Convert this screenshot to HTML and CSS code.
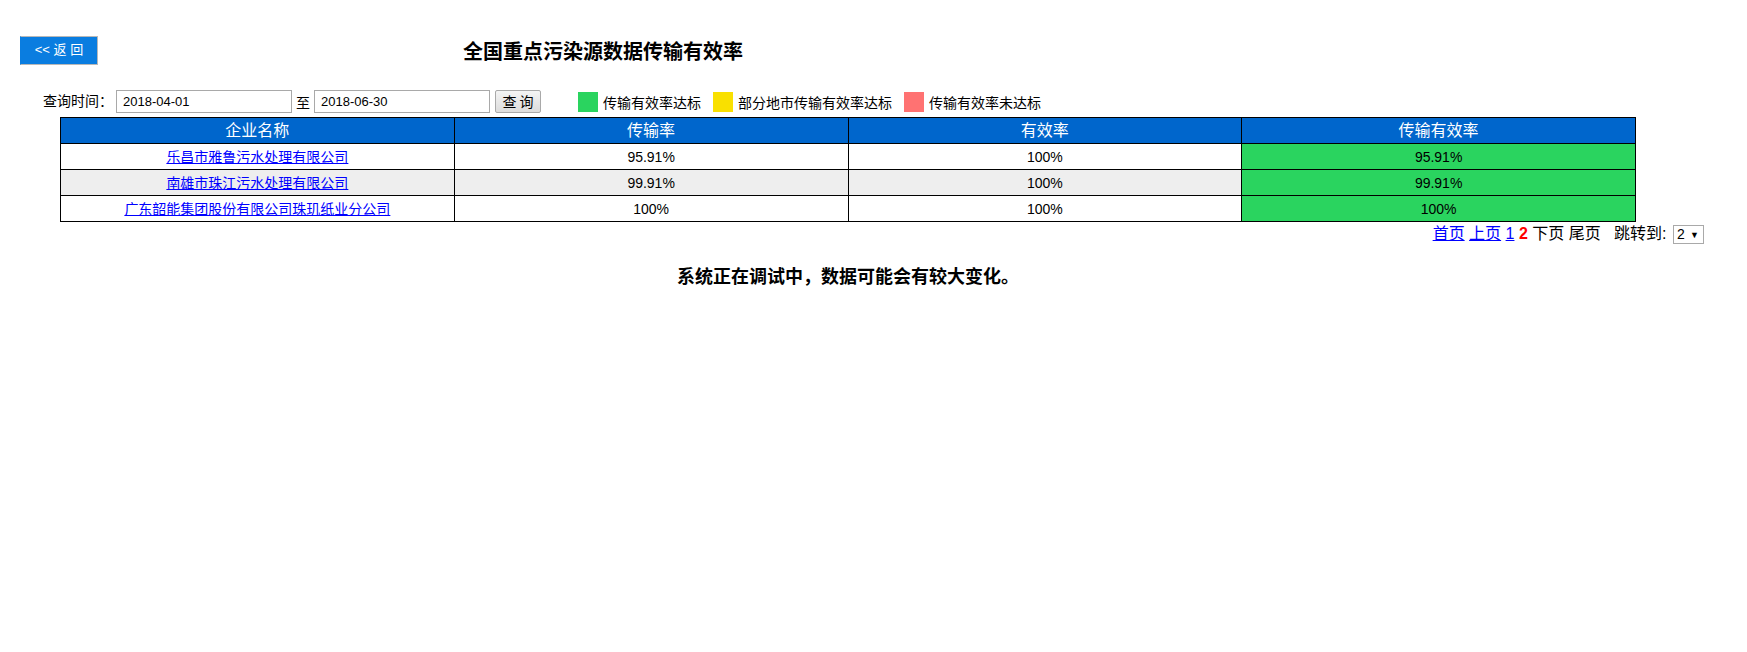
FILE: index.html
```html
<!DOCTYPE html>
<html lang="zh-CN">
<head>
    <meta charset="UTF-8">
    <title>全国重点污染源数据传输有效率</title>
    <link rel="stylesheet" href="styles.css">
</head>
<body>
    <div class="header">
        <a class="back-btn" href="#">&lt;&lt; 返 回</a>
        <h1 class="title">全国重点污染源数据传输有效率</h1>
    </div>

    <div class="search">
        <span class="label">查询时间：</span>
        <input type="text" class="date" value="2018-04-01">
        <span class="to">至</span>
        <input type="text" class="date" value="2018-06-30">
        <button class="query-btn">查 询</button>
        <div class="legend">
            <span class="swatch green"></span><span class="legend-text">传输有效率达标</span>
            <span class="swatch yellow"></span><span class="legend-text">部分地市传输有效率达标</span>
            <span class="swatch red"></span><span class="legend-text">传输有效率未达标</span>
        </div>
    </div>

    <table class="data">
        <tr>
            <th>企业名称</th>
            <th>传输率</th>
            <th>有效率</th>
            <th>传输有效率</th>
        </tr>
        <tr>
            <td><a href="#">乐昌市雅鲁污水处理有限公司</a></td>
            <td>95.91%</td>
            <td>100%</td>
            <td class="ok">95.91%</td>
        </tr>
        <tr class="alt">
            <td><a href="#">南雄市珠江污水处理有限公司</a></td>
            <td>99.91%</td>
            <td>100%</td>
            <td class="ok">99.91%</td>
        </tr>
        <tr>
            <td><a href="#">广东韶能集团股份有限公司珠玑纸业分公司</a></td>
            <td>100%</td>
            <td>100%</td>
            <td class="ok">100%</td>
        </tr>
    </table>

    <div class="pager">
        <a href="#">首页</a> <a href="#">上页</a> <a href="#">1</a> <span class="current">2</span> <span>下页</span> <span>尾页</span>&nbsp;&nbsp;&nbsp;跳转到:
        <span class="jump">
            <select>
                <option>1</option>
                <option selected>2</option>
            </select>
            <span class="arrow">▼</span>
        </span>
    </div>

    <p class="notice">系统正在调试中，数据可能会有较大变化。</p>
</body>
</html>
```

FILE: styles.css
```css
body {
    margin: 0;
    font-family: "Liberation Sans", "Noto Sans CJK SC", sans-serif;
    font-size: 14px;
    color: #000;
    background: #fff;
}

.header {
    display: flex;
    align-items: center;
    padding: 36px 0 0 20px;
    height: 29px;
}

.back-btn {
    display: block;
    box-sizing: border-box;
    width: 78px;
    height: 29px;
    line-height: 26px;
    background-color: #0a7de0;
    border: 1px solid #b8b8b8;
    border-left-color: #0a7de0;
    color: white;
    font-size: 13px;
    text-align: center;
    text-decoration: none;
}

.title {
    margin: 3px 0 0 365px;
    font-size: 20px;
    font-weight: bold;
    line-height: 29px;
}

.search {
    display: flex;
    align-items: center;
    height: 23px;
    margin-top: 25px;
    padding-left: 43px;
}

.label {
    width: 73px;
    line-height: 23px;
}

.date {
    box-sizing: border-box;
    width: 176px;
    height: 23px;
    margin: 0;
    padding: 0 6px;
    border: 1px solid #a9a9a9;
    font-family: "Liberation Sans", sans-serif;
    font-size: 13px;
}

.to {
    margin: 0 4px;
}

.query-btn {
    box-sizing: border-box;
    width: 46px;
    height: 23px;
    margin: 0 0 0 5px;
    padding: 0;
    border: 1px solid #a9a9a9;
    border-radius: 2px;
    background: linear-gradient(#f4f4f4, #dcdcdc);
    font-family: "Noto Sans CJK SC", sans-serif;
    font-size: 14px;
    line-height: 21px;
}

.legend {
    display: flex;
    align-items: center;
    margin-left: 37px;
}

.swatch {
    display: inline-block;
    width: 20px;
    height: 20px;
    margin-right: 5px;
}

.green { background-color: #2ad45f; }
.yellow { background-color: #f9e000; }
.red { background-color: #ff7272; }

.legend-text {
    margin-right: 12px;
    font-size: 14px;
}

.data {
    width: 1576px;
    margin: 4px 0 0 60px;
    border-collapse: collapse;
    table-layout: fixed;
}

.data th, .data td {
    height: 25px;
    padding: 0;
    border: 1px solid #000;
    text-align: center;
    line-height: 24px;
}

.data th {
    background-color: #0066cc;
    color: white;
    font-size: 16px;
    font-weight: normal;
}

.data td {
    font-size: 14px;
}

.data a {
    color: #0000ff;
}

.data .alt td {
    background-color: #eeeeee;
}

.data td.ok {
    background-color: #2ad45f;
}

.pager {
    padding: 2px 43px 0 0;
    height: 22px;
    text-align: right;
    font-size: 16px;
    line-height: 20px;
}

.pager a {
    color: #0000ff;
}

.pager .current {
    color: #ff0000;
    font-weight: bold;
}

.jump {
    position: relative;
    display: inline-block;
    vertical-align: top;
}

.jump select {
    box-sizing: border-box;
    width: 31px;
    height: 19px;
    margin: 0 0 0 2px;
    padding: 0 0 0 3px;
    border: 1px solid #a9a9a9;
    border-radius: 0;
    background: #fff;
    appearance: none;
    -webkit-appearance: none;
    font-family: "Liberation Sans", sans-serif;
    font-size: 14px;
}

.jump .arrow {
    position: absolute;
    right: 5px;
    top: 1px;
    font-size: 9px;
    pointer-events: none;
}

.notice {
    width: 1576px;
    margin: 19px 0 0 60px;
    font-size: 18px;
    font-weight: bold;
    text-align: center;
    line-height: 24px;
}
```
